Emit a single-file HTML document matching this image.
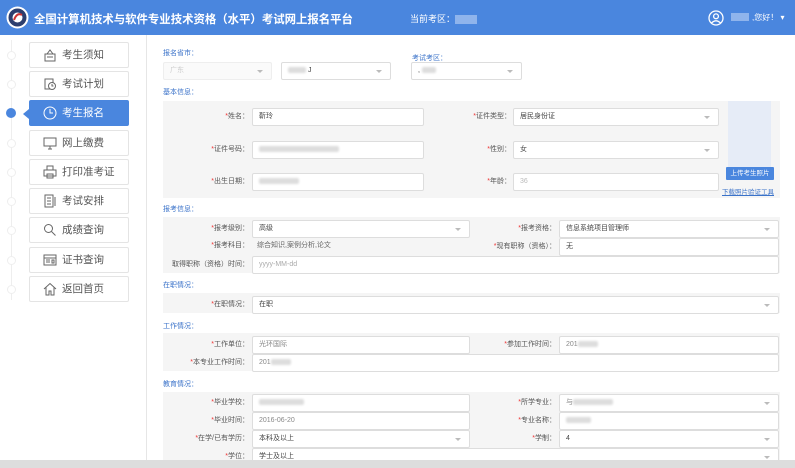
<!DOCTYPE html>
<html><head><meta charset="utf-8"><style>
*{margin:0;padding:0;box-sizing:border-box}
body{width:795px;height:468px;overflow:hidden;background:#fff;font-family:"Liberation Sans","Noto Sans CJK SC",sans-serif;position:relative;color:#333}
.a{position:absolute}
.hdr{left:0;top:0;width:795px;height:35px;background:#4a86de}
.side{left:0;top:35px;width:147px;height:433px;background:#fff;border-right:1px solid #e6e6e6}
.mi{position:absolute;left:29px;width:100px;height:26px;border:1px solid #e4e4e4;border-radius:2px;background:#fff;font-size:10.5px;color:#555;line-height:24px;padding-left:32px}
.mi svg{position:absolute;left:13px;top:5px}
.mi.on{background:#4a86de;color:#fff;border-color:#4a86de}
.dot{position:absolute;left:7px;width:9px;height:9px;border-radius:50%;border:1px solid #eee;background:#fff}
.sec{font-size:7px;color:#3a72c9}
.pan{background:#f5f5f5;left:163px;width:617px}
.lb{font-size:7px;color:#555;text-align:right;line-height:17px;height:17px}
.lb i{color:#e33;font-style:normal}
.in{background:#fff;border:1px solid #ddd;border-radius:2px;height:18px;font-size:7px;line-height:16px;padding-left:6px;color:#444}
.sel:after{content:"";position:absolute;right:8px;top:7px;border:3px solid transparent;border-top:3px solid #bbb}
.blur{display:inline-block;background:#ddd;height:6px;vertical-align:middle;border-radius:2px;filter:blur(1px)}
</style></head><body>
<div class="a hdr"></div>
<svg class="a" style="left:6px;top:6px" width="23" height="23" viewBox="0 0 23 23"><circle cx="11.5" cy="11.5" r="11" fill="#fff"/><circle cx="11.5" cy="11.5" r="9" fill="#2c3e6e"/><circle cx="11.5" cy="11.5" r="5" fill="#fff"/><path d="M8 14 Q11 6 16 9" stroke="#c33" stroke-width="2" fill="none"/></svg>
<div class="a" style="left:34px;top:11px;font-size:11.4px;font-weight:bold;color:#fff">全国计算机技术与软件专业技术资格（水平）考试网上报名平台</div>
<div class="a" style="left:410px;top:12px;font-size:9px;color:#fff">当前考区：<span style="display:inline-block;width:22px;height:9px;background:#8fb4ec;vertical-align:middle"></span></div>
<svg class="a" style="left:708px;top:10px" width="16" height="16" viewBox="0 0 16 16"><circle cx="8" cy="8" r="7" fill="none" stroke="#fff" stroke-width="1.3"/><circle cx="8" cy="6.3" r="2.4" fill="none" stroke="#fff" stroke-width="1.3"/><path d="M3.5 13 Q8 8.5 12.5 13" fill="none" stroke="#fff" stroke-width="1.3"/></svg>
<div class="a" style="left:731px;top:13px;width:18px;height:8px;background:#8fb4ec"></div>
<div class="a" style="left:752px;top:12px;font-size:8px;color:#fff">,您好！ ▾</div>

<div class="a side"></div>
<div class="a" style="left:11px;top:40px;width:1px;height:260px;background:#eee"></div>
<div class="dot" style="top:51px"></div><div class="dot" style="top:80px"></div>
<div class="a" style="left:6px;top:108px;width:10px;height:10px;border-radius:50%;background:#4a86de"></div>
<div class="dot" style="top:139px"></div><div class="dot" style="top:168px"></div><div class="dot" style="top:197px"></div><div class="dot" style="top:226px"></div><div class="dot" style="top:256px"></div><div class="dot" style="top:285px"></div>
<div class="mi" style="top:42px"><svg width="14" height="14" viewBox="0 0 14 14" fill="none" stroke="#666"><path d="M2 6h10v7H2zM4 6l3-4 3 4M4 9h6"/></svg>考生须知</div>
<div class="mi" style="top:71px"><svg width="14" height="14" viewBox="0 0 14 14" fill="none" stroke="#666"><path d="M2 2h8v10H2z"/><circle cx="9" cy="9" r="3.5" fill="#fff"/><path d="M9 7v2h1.5"/></svg>考试计划</div>
<div class="mi on" style="top:100px"><svg width="14" height="14" viewBox="0 0 14 14" fill="none" stroke="#fff"><circle cx="7" cy="7" r="6"/><path d="M7 3v4h3"/></svg>考生报名</div>
<div class="a" style="left:23px;top:109px;border:5px solid transparent;border-right:6px solid #4a86de;border-left:0"></div>
<div class="mi" style="top:130px"><svg width="14" height="14" viewBox="0 0 14 14" fill="none" stroke="#666"><path d="M1 2h12v8H1zM5 13h4M7 10v3"/></svg>网上缴费</div>
<div class="mi" style="top:159px"><svg width="14" height="14" viewBox="0 0 14 14" fill="none" stroke="#666"><path d="M4 1h6v4H4zM1 5h12v6H1zM4 9h6v4H4z"/></svg>打印准考证</div>
<div class="mi" style="top:188px"><svg width="14" height="14" viewBox="0 0 14 14" fill="none" stroke="#666"><path d="M2 1h8v12H2zM4 4h4M4 7h4M4 10h4M12 3v9"/></svg>考试安排</div>
<div class="mi" style="top:217px"><svg width="14" height="14" viewBox="0 0 14 14" fill="none" stroke="#666"><circle cx="5.5" cy="5.5" r="4"/><path d="M8.5 8.5l4 4"/></svg>成绩查询</div>
<div class="mi" style="top:247px"><svg width="14" height="14" viewBox="0 0 14 14" fill="none" stroke="#666"><path d="M1 2h12v10H1zM1 5h12M3 7h4M3 9h4M9 7h2v3H9z"/></svg>证书查询</div>
<div class="mi" style="top:276px"><svg width="14" height="14" viewBox="0 0 14 14" fill="none" stroke="#666"><path d="M1 7l6-5.5L13 7M3 5.5V13h3V9h2v4h3V5.5"/></svg>返回首页</div>

<div class="a sec" style="left:163px;top:48px">报名省市：</div>
<div class="a sec" style="left:412px;top:53px">考试考区：</div>
<div class="a in sel" style="left:163px;top:62px;width:109px;background:#fafafa;border-color:#eee;color:#ccc">广东</div>
<div class="a in sel" style="left:281px;top:62px;width:110px"><span class="blur" style="width:18px"></span> J</div>
<div class="a in sel" style="left:411px;top:62px;width:111px">, <span class="blur" style="width:14px"></span></div>

<div class="a sec" style="left:163px;top:87px">基本信息：</div>
<div class="a pan" style="top:101px;height:97px"></div>
<div class="a" style="left:728px;top:101px;width:43px;height:69px;background:#e6ecf7"></div>
<div class="a lb" style="left:163px;top:108px;width:86px"><i>*</i>姓名：</div>
<div class="a in" style="left:252px;top:108px;width:172px">靳玲</div>
<div class="a lb" style="left:430px;top:108px;width:81px"><i>*</i>证件类型：</div>
<div class="a in sel" style="left:513px;top:108px;width:206px">居民身份证</div>
<div class="a lb" style="left:163px;top:141px;width:86px"><i>*</i>证件号码：</div>
<div class="a in" style="left:252px;top:141px;width:172px"><span class="blur" style="width:80px"></span></div>
<div class="a lb" style="left:430px;top:141px;width:81px"><i>*</i>性别：</div>
<div class="a in sel" style="left:513px;top:141px;width:206px">女</div>
<div class="a lb" style="left:163px;top:173px;width:86px"><i>*</i>出生日期：</div>
<div class="a in" style="left:252px;top:173px;width:172px"><span class="blur" style="width:40px"></span></div>
<div class="a lb" style="left:430px;top:173px;width:81px"><i>*</i>年龄：</div>
<div class="a in" style="left:513px;top:173px;width:206px;color:#bbb">36</div>
<div class="a" style="left:726px;top:167px;width:48px;height:13px;background:#4a86de;color:#fff;font-size:6.5px;line-height:13px;text-align:center;border-radius:1px">上传考生照片</div>
<div class="a" style="left:722px;top:186px;font-size:6.5px;color:#3a72c9;text-decoration:underline">下载照片验证工具</div>

<div class="a sec" style="left:163px;top:204px">报考信息：</div>
<div class="a pan" style="top:217px;height:56px"></div>
<div class="a lb" style="left:163px;top:220px;width:86px"><i>*</i>报考级别：</div>
<div class="a in sel" style="left:252px;top:220px;width:218px">高级</div>
<div class="a lb" style="left:470px;top:220px;width:86px"><i>*</i>报考资格：</div>
<div class="a in sel" style="left:559px;top:220px;width:220px">信息系统项目管理师</div>
<div class="a lb" style="left:163px;top:237px;width:86px"><i>*</i>报考科目：</div>
<div class="a lb" style="left:257px;top:237px;color:#666;text-align:left">综合知识,案例分析,论文</div>
<div class="a lb" style="left:460px;top:238px;width:96px"><i>*</i>现有职称（资格）：</div>
<div class="a in" style="left:559px;top:238px;width:220px">无</div>
<div class="a lb" style="left:163px;top:256px;width:86px">取得职称（资格）时间：</div>
<div class="a in" style="left:252px;top:256px;width:527px;color:#aaa">yyyy-MM-dd</div>

<div class="a sec" style="left:163px;top:280px">在职情况：</div>
<div class="a pan" style="top:293px;height:20px"></div>
<div class="a lb" style="left:163px;top:296px;width:86px"><i>*</i>在职情况：</div>
<div class="a in sel" style="left:252px;top:296px;width:527px">在职</div>

<div class="a sec" style="left:163px;top:321px">工作情况：</div>
<div class="a pan" style="top:333px;height:38px"></div>
<div class="a lb" style="left:163px;top:336px;width:86px"><i>*</i>工作单位：</div>
<div class="a in" style="left:252px;top:336px;width:218px;color:#888">光环国际</div>
<div class="a lb" style="left:470px;top:336px;width:86px"><i>*</i>参加工作时间：</div>
<div class="a in" style="left:559px;top:336px;width:220px;color:#888">201<span class="blur" style="width:20px"></span></div>
<div class="a lb" style="left:163px;top:354px;width:86px"><i>*</i>本专业工作时间：</div>
<div class="a in" style="left:252px;top:354px;width:527px;color:#888">201<span class="blur" style="width:20px"></span></div>

<div class="a sec" style="left:163px;top:379px">教育情况：</div>
<div class="a pan" style="top:392px;height:68px"></div>
<div class="a lb" style="left:163px;top:394px;width:86px"><i>*</i>毕业学校：</div>
<div class="a in" style="left:252px;top:394px;width:218px"><span class="blur" style="width:45px"></span></div>
<div class="a lb" style="left:470px;top:394px;width:86px"><i>*</i>所学专业：</div>
<div class="a in sel" style="left:559px;top:394px;width:220px;color:#888">与<span class="blur" style="width:40px"></span></div>
<div class="a lb" style="left:163px;top:412px;width:86px"><i>*</i>毕业时间：</div>
<div class="a in" style="left:252px;top:412px;width:218px;color:#888">2016-06-20</div>
<div class="a lb" style="left:470px;top:412px;width:86px"><i>*</i>专业名称：</div>
<div class="a in" style="left:559px;top:412px;width:220px"><span class="blur" style="width:25px"></span></div>
<div class="a lb" style="left:163px;top:430px;width:86px"><i>*</i>在学/已有学历：</div>
<div class="a in sel" style="left:252px;top:430px;width:218px">本科及以上</div>
<div class="a lb" style="left:470px;top:430px;width:86px"><i>*</i>学制：</div>
<div class="a in sel" style="left:559px;top:430px;width:220px">4</div>
<div class="a lb" style="left:163px;top:448px;width:86px"><i>*</i>学位：</div>
<div class="a in sel" style="left:252px;top:448px;width:527px">学士及以上</div>
<div class="a" style="left:0;top:460px;width:795px;height:8px;background:#ddd"></div>
</body></html>
